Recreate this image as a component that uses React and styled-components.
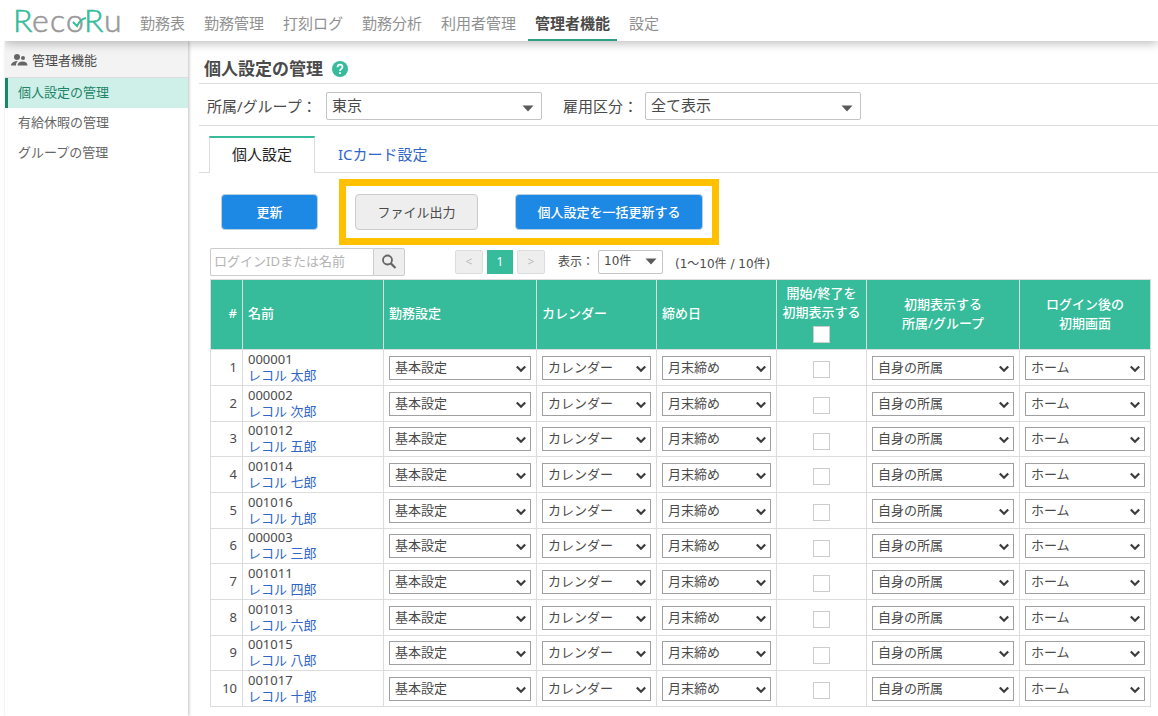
import React from "react";
import styled, { createGlobalStyle } from "styled-components";

const c = {
  teal: "#36bb9b",
  tealDark: "#2ba084",
  text: "#4a4a4a",
  muted: "#909090",
  line: "#dcdcdc",
  link: "#2f66c8",
  blue: "#1e88e5",
};

const GlobalStyle = createGlobalStyle`
  *, *::before, *::after { box-sizing: border-box; }
  body {
    margin: 0;
    background: #fff;
    color: ${c.text};
    font-family: "Noto Sans", "Noto Sans CJK JP", sans-serif;
    font-size: 13px;
    line-height: 20px;
  }
  button, input, select { font: inherit; color: inherit; margin: 0; }
  a { text-decoration: none; }
`;

const Page = styled.div`
  min-height: 100vh;
  padding-left: 5px;
`;

const Header = styled.header`
  display: flex;
  align-items: stretch;
  height: 41px;
  padding-left: 6px;
  background: #fff;
  position: relative;
  box-shadow: 0 2px 10px rgba(0, 0, 0, 0.28);
  clip-path: inset(0 0 -14px 0);
`;

const LogoLink = styled.a`
  display: block;
  width: 117px;
  height: 41px;
`;

const Nav = styled.nav`
  display: flex;
  gap: 5px;
  padding-left: 5px;
`;

const NavLink = styled.a`
  display: flex;
  align-items: center;
  padding: 6px 7px 0;
  font-size: 15px;
  white-space: nowrap;
  color: ${(p) => (p.$active ? c.text : c.muted)};
  font-weight: ${(p) => (p.$active ? 700 : 400)};
  border-bottom: 2px solid ${(p) => (p.$active ? c.tealDark : "transparent")};
`;

const Body = styled.div`
  display: flex;
  min-height: calc(100vh - 41px);
`;

const Sidebar = styled.aside`
  flex: 0 0 183px;
  box-shadow: 1px 0 3px rgba(0, 0, 0, 0.25);
`;

const SideTitle = styled.div`
  display: flex;
  align-items: center;
  gap: 4px;
  height: 37px;
  padding: 2px 6px 0;
  background: #f3f3f3;
  border-bottom: 1px solid ${c.line};
`;

const SideLink = styled.a`
  display: flex;
  align-items: center;
  height: 30px;
  padding: 0 0 2px 10px;
  border-left: 3px solid ${(p) => (p.$active ? "#1e8469" : "transparent")};
  background: ${(p) => (p.$active ? "#cff0e8" : "transparent")};
  color: ${(p) => (p.$active ? "#1e8469" : "#666")};
`;

const Main = styled.main`
  flex: 1;
  min-width: 0;
  padding-left: 11px;
`;

const TitleRow = styled.div`
  display: flex;
  align-items: center;
  gap: 9px;
  height: 43px;
  padding: 13px 0 0 5px;
  border-bottom: 1px solid ${c.line};
`;

const Title = styled.h1`
  margin: 0;
  font-size: 17px;
  line-height: 24px;
  font-weight: 700;
`;

const HelpButton = styled.button`
  display: flex;
  padding: 0;
  border: 0;
  background: none;
`;

const Filters = styled.div`
  display: flex;
  align-items: center;
  gap: 21px;
  height: 42px;
  padding: 6px 0 4px 8px;
  border-bottom: 1px solid ${c.line};
  font-size: 15px;
`;

const Field = styled.label`
  display: flex;
  align-items: center;
  white-space: nowrap;
`;

const FieldName = styled.span`
  flex: 0 0 ${(p) => p.$width}px;
`;

const SelectWrap = styled.span`
  display: block;
  position: relative;
  width: ${(p) => p.$width || "100%"};
  svg {
    position: absolute;
    right: ${(p) => p.$iconRight || "5px"};
    top: 50%;
    margin-top: ${(p) => p.$iconShift || "-4px"};
    pointer-events: none;
  }
`;

const SelectBox = styled.select`
  display: block;
  appearance: none;
  width: 100%;
  height: ${(p) => p.$height || "24px"};
  padding: 0 20px 2px 5px;
  border: 1px solid ${(p) => p.$border || "#a0a0a0"};
  border-radius: ${(p) => p.$radius || "0"};
  background: #fff;
`;

const Tabs = styled.div`
  display: flex;
  align-items: stretch;
  height: 47px;
  padding: 10px 0 0 10px;
  box-shadow: inset 0 -1px 0 ${c.line};
  font-size: 15px;
`;

const Tab = styled.button`
  padding: 0 22px 4px;
  border: 1px solid ${(p) => (p.$active ? c.line : "transparent")};
  border-top: 2px solid ${(p) => (p.$active ? c.teal : "transparent")};
  border-bottom: 0;
  background: ${(p) => (p.$active ? "#fff" : "transparent")};
  color: ${(p) => (p.$active ? "#222" : c.link)};
`;

const Actions = styled.div`
  display: flex;
  align-items: center;
  gap: 21px;
  padding: 6px 0 0 22px;
`;

const Highlight = styled.div`
  display: flex;
  gap: 37px;
  padding: 8px 9px;
  border: 7px solid #ffc000;
`;

const ActionButton = styled.button`
  width: ${(p) => p.$width}px;
  height: 36px;
  padding: 0;
  border: 1px solid ${(p) => (p.$plain ? "#ccc" : "#b9cfe3")};
  border-radius: 4px;
  background: ${(p) => (p.$plain ? "#eee" : c.blue)};
  color: ${(p) => (p.$plain ? c.text : "#fff")};
  font-weight: ${(p) => (p.$plain ? 400 : 500)};
`;

const ListTools = styled.div`
  display: flex;
  align-items: center;
  padding: 3px 0 3px 11px;
`;

const SearchForm = styled.form`
  display: flex;
  height: 28px;
  margin-right: 50px;
`;

const SearchInput = styled.input`
  width: 163px;
  padding: 0 3px 3px;
  border: 1px solid #ccc;
  border-right: 0;
  border-radius: 2px 0 0 2px;
  &::placeholder { color: #b4b4b4; opacity: 1; }
`;

const SearchButton = styled.button`
  display: flex;
  align-items: center;
  justify-content: center;
  width: 32px;
  padding: 0;
  border: 1px solid #ccc;
  border-radius: 0 2px 2px 0;
  background: #eee;
`;

const Pager = styled.nav`
  display: flex;
  gap: 4px;
  margin-right: 13px;
`;

const PageButton = styled.button`
  width: ${(p) => (p.$current ? 26 : 28)}px;
  height: 24px;
  padding: 0;
  border: 1px solid ${(p) => (p.$current ? c.teal : "#ddd")};
  border-radius: ${(p) => (p.$current ? 0 : 2)}px;
  background: ${(p) => (p.$current ? c.teal : "#eee")};
  color: ${(p) => (p.$current ? "#fff" : "#bbb")};
  font-size: 12px;
  line-height: 20px;
`;

const PageSize = styled(Field)`
  font-family: "DejaVu Sans", "Noto Sans CJK JP", sans-serif;
  font-size: 12px;
  margin-right: 12px;
`;

const Count = styled.span`
  padding-top: 3px;
  font-family: "DejaVu Sans", "Noto Sans CJK JP", sans-serif;
  font-size: 12px;
`;

const TableArea = styled.div`
  padding: 0 8px 0 11px;
`;

const Table = styled.table`
  width: 100%;
  table-layout: fixed;
  border-collapse: separate;
  border-spacing: 0;
  border-top: 1px solid ${c.line};
  border-left: 1px solid ${c.line};
  tbody tr { height: 36px; }
  tbody tr:nth-child(3n) { height: 35px; }
`;

const Th = styled.th`
  height: 70px;
  padding: 0 5px 2px;
  border-right: 1px solid ${c.line};
  border-bottom: 1px solid ${c.line};
  background: ${c.teal};
  color: #fff;
  font-weight: 500;
  line-height: 19px;
  white-space: nowrap;
  text-align: ${(p) => p.$align || "left"};
`;

const Td = styled.td`
  padding: 0 5px ${(p) => (p.$text ? 2 : 0)}px;
  border-right: 1px solid ${c.line};
  border-bottom: 1px solid ${c.line};
  line-height: 16px;
  text-align: ${(p) => p.$align || "left"};
`;

const UserLink = styled.a`
  display: block;
  color: ${c.link};
`;

const Check = styled.input`
  appearance: none;
  display: block;
  width: 17px;
  height: 17px;
  margin: 4px auto 0;
  border: 1px solid #ccc;
  background: #fff;
`;

function Logo() {
  return (
    <svg width="117" height="41" role="img" aria-label="RecoRu">
      <g fontFamily="Lato, sans-serif" fontSize="32" fontWeight="300" fill="#999" stroke="#999" strokeWidth="0.6">
        <text x="2" y="32" fill={c.teal} stroke={c.teal}>R</text>
        <text x="21" y="32">e</text>
        <text x="39" y="32">c</text>
        <text x="55" y="32">o</text>
        <text x="73" y="32" fill={c.teal} stroke={c.teal}>R</text>
        <text x="93" y="32">u</text>
      </g>
      <path d="M62 22l4 4c2-4 4-7 9-8" fill="none" stroke={c.teal} strokeWidth="2" />
    </svg>
  );
}

const PeopleIcon = () => (
  <svg width="17" height="14" viewBox="0 0 17 14" fill="#666" aria-hidden="true">
    <circle cx="6" cy="4" r="3" />
    <circle cx="12" cy="5" r="2" />
    <path d="M0 12.500C0 10 3 8 7 8C5.500 9 5 10.500 5 12.500Z" />
    <path d="M6.500 12.500C6.500 10 8.500 8.500 11.500 8.500S16.500 10 16.500 12.500Z" />
  </svg>
);

const HelpIcon = () => (
  <svg width="16" height="16" viewBox="0 0 16 16" aria-hidden="true">
    <circle cx="8" cy="8" r="8" fill={c.teal} />
    <path d="M5.500 6.200C5.500 2.700 10.500 2.900 10.500 6C10.500 7.800 8 8 8 10" fill="none" stroke="#fff" strokeWidth="1.700" />
    <rect x="7.100" y="11.200" width="1.800" height="1.800" fill="#fff" />
  </svg>
);

const SearchIcon = () => (
  <svg width="16" height="16" viewBox="0 0 16 16" fill="none" stroke="#666" aria-hidden="true">
    <circle cx="6.500" cy="6" r="4.500" strokeWidth="1.800" />
    <path d="M9.800 9.400L14.500 14" strokeWidth="2.200" />
  </svg>
);

const Triangle = () => (
  <svg width="12" height="7" viewBox="0 0 12 7" fill="#5a5a5a" aria-hidden="true">
    <path d="M0.500 0.500H11.500L6 6.500Z" />
  </svg>
);

const Chevron = () => (
  <svg width="10" height="8" viewBox="0 0 10 8" fill="none" stroke="#3c3c3c" strokeWidth="2.200" aria-hidden="true">
    <path d="M0.800 1.500L5 5.700L9.200 1.500" />
  </svg>
);

function CellSelect({ label, value }) {
  return (
    <SelectWrap $iconShift="-3px">
      <SelectBox aria-label={label} defaultValue={value}>
        <option>{value}</option>
      </SelectBox>
      <Chevron />
    </SelectWrap>
  );
}

function FilterSelect({ value }) {
  return (
    <SelectWrap $width="216px" $iconRight="8px" $iconShift="-1px">
      <SelectBox $height="28px" $border="#c4c4c4" $radius="2px" defaultValue={value}>
        <option>{value}</option>
      </SelectBox>
      <Triangle />
    </SelectWrap>
  );
}

const navItems = ["勤務表", "勤務管理", "打刻ログ", "勤務分析", "利用者管理", "管理者機能", "設定"];
const sideItems = ["個人設定の管理", "有給休暇の管理", "グループの管理"];
const columnWidths = [32, 141, 153, 120, 120, 90, 153, 131];
const users = [
  ["000001", "レコル 太郎"],
  ["000002", "レコル 次郎"],
  ["001012", "レコル 五郎"],
  ["001014", "レコル 七郎"],
  ["001016", "レコル 九郎"],
  ["000003", "レコル 三郎"],
  ["001011", "レコル 四郎"],
  ["001013", "レコル 六郎"],
  ["001015", "レコル 八郎"],
  ["001017", "レコル 十郎"],
];

function UserTable() {
  return (
    <Table>
      <colgroup>
        {columnWidths.map((w, i) => (
          <col key={i} width={w} />
        ))}
      </colgroup>
      <thead>
        <tr>
          <Th $align="right">#</Th>
          <Th>名前</Th>
          <Th>勤務設定</Th>
          <Th>カレンダー</Th>
          <Th>締め日</Th>
          <Th $align="center">
            開始/終了を<br />初期表示する
            <Check type="checkbox" aria-label="開始/終了を初期表示する" />
          </Th>
          <Th $align="center">初期表示する<br />所属/グループ</Th>
          <Th $align="center">ログイン後の<br />初期画面</Th>
        </tr>
      </thead>
      <tbody>
        {users.map(([id, name], i) => (
          <tr key={id}>
            <Td $text $align="right">{i + 1}</Td>
            <Td $text>
              {id}
              <UserLink href="#user">{name}</UserLink>
            </Td>
            <Td><CellSelect label="勤務設定" value="基本設定" /></Td>
            <Td><CellSelect label="カレンダー" value="カレンダー" /></Td>
            <Td><CellSelect label="締め日" value="月末締め" /></Td>
            <Td><Check type="checkbox" aria-label={name} /></Td>
            <Td><CellSelect label="所属/グループ" value="自身の所属" /></Td>
            <Td><CellSelect label="初期画面" value="ホーム" /></Td>
          </tr>
        ))}
      </tbody>
    </Table>
  );
}

export default function App() {
  return (
    <Page>
      <GlobalStyle />
      <Header>
        <LogoLink href="#home"><Logo /></LogoLink>
        <Nav>
          {navItems.map((item) => (
            <NavLink key={item} href="#nav" $active={item === "管理者機能"}>{item}</NavLink>
          ))}
        </Nav>
      </Header>
      <Body>
        <Sidebar>
          <SideTitle><PeopleIcon />管理者機能</SideTitle>
          {sideItems.map((item, i) => (
            <SideLink key={item} href="#side" $active={i === 0}>{item}</SideLink>
          ))}
        </Sidebar>
        <Main>
          <TitleRow>
            <Title>個人設定の管理</Title>
            <HelpButton type="button" aria-label="ヘルプ"><HelpIcon /></HelpButton>
          </TitleRow>
          <Filters>
            <Field>
              <FieldName $width={119}>所属/グループ：</FieldName>
              <FilterSelect value="東京" />
            </Field>
            <Field>
              <FieldName $width={82}>雇用区分：</FieldName>
              <FilterSelect value="全て表示" />
            </Field>
          </Filters>
          <Tabs role="tablist">
            <Tab type="button" role="tab" aria-selected="true" $active>個人設定</Tab>
            <Tab type="button" role="tab" aria-selected="false">ICカード設定</Tab>
          </Tabs>
          <Actions>
            <ActionButton type="button" $width={97}>更新</ActionButton>
            <Highlight>
              <ActionButton type="button" $width={123} $plain>ファイル出力</ActionButton>
              <ActionButton type="button" $width={188}>個人設定を一括更新する</ActionButton>
            </Highlight>
          </Actions>
          <ListTools>
            <SearchForm>
              <SearchInput type="text" placeholder="ログインIDまたは名前" aria-label="ログインIDまたは名前" />
              <SearchButton type="button" aria-label="検索"><SearchIcon /></SearchButton>
            </SearchForm>
            <Pager>
              <PageButton type="button">&lt;</PageButton>
              <PageButton type="button" $current>1</PageButton>
              <PageButton type="button">&gt;</PageButton>
            </Pager>
            <PageSize>
              <FieldName $width={40}>表示：</FieldName>
              <SelectWrap $width="65px" $iconRight="6px">
                <SelectBox $border="#c4c4c4" $radius="2px" defaultValue="10件">
                  <option>10件</option>
                </SelectBox>
                <Triangle />
              </SelectWrap>
            </PageSize>
            <Count>(1〜10件 / 10件)</Count>
          </ListTools>
          <TableArea><UserTable /></TableArea>
        </Main>
      </Body>
    </Page>
  );
}
